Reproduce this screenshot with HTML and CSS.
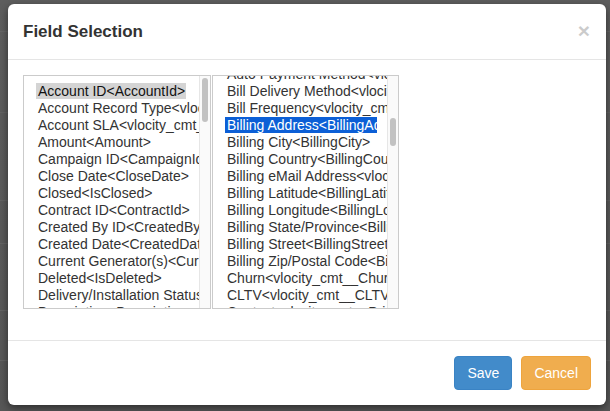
FILE: index.html
```html
<!DOCTYPE html>
<html lang="en">
<head>
<meta charset="utf-8">
<title>Field Selection</title>
<link rel="stylesheet" href="styles.css">
</head>
<body>
<div class="modal">
  <div class="modal-header">
    <h4 class="title">Field Selection</h4>
    <span class="close">&times;</span>
  </div>
  <div class="modal-body">
    <div class="lists">
      <div class="list list-a">
        <div class="items">
          <div class="inner">
            <div class="opt"><span class="hl hl-gray">Account ID&lt;AccountId&gt;</span></div>
            <div class="opt">Account Record Type&lt;vlocity_cmt__AccountRecordType__c&gt;</div>
            <div class="opt">Account SLA&lt;vlocity_cmt__AccountSLA__c&gt;</div>
            <div class="opt">Amount&lt;Amount&gt;</div>
            <div class="opt">Campaign ID&lt;CampaignId&gt;</div>
            <div class="opt">Close Date&lt;CloseDate&gt;</div>
            <div class="opt">Closed&lt;IsClosed&gt;</div>
            <div class="opt">Contract ID&lt;ContractId&gt;</div>
            <div class="opt">Created By ID&lt;CreatedById&gt;</div>
            <div class="opt">Created Date&lt;CreatedDate&gt;</div>
            <div class="opt">Current Generator(s)&lt;CurrentGenerators__c&gt;</div>
            <div class="opt">Deleted&lt;IsDeleted&gt;</div>
            <div class="opt">Delivery/Installation Status&lt;DeliveryInstallationStatus__c&gt;</div>
            <div class="opt">Description&lt;Description&gt;</div>
          </div>
        </div>
        <div class="track"><div class="thumb thumb-a"></div></div>
      </div>
      <div class="list list-b">
        <div class="items">
          <div class="inner scrolled">
            <div class="opt">Auto Payment Method&lt;vlocity_cmt__AutoPaymentMethod__c&gt;</div>
            <div class="opt">Bill Delivery Method&lt;vlocity_cmt__BillDeliveryMethod__c&gt;</div>
            <div class="opt">Bill Frequency&lt;vlocity_cmt__BillFrequency__c&gt;</div>
            <div class="opt"><span class="hl hl-blue">Billing Address&lt;BillingAddress&gt;</span></div>
            <div class="opt">Billing City&lt;BillingCity&gt;</div>
            <div class="opt">Billing Country&lt;BillingCountry&gt;</div>
            <div class="opt">Billing eMail Address&lt;vlocity_cmt__BillingEmailAddress__c&gt;</div>
            <div class="opt">Billing Latitude&lt;BillingLatitude&gt;</div>
            <div class="opt">Billing Longitude&lt;BillingLongitude&gt;</div>
            <div class="opt">Billing State/Province&lt;BillingState&gt;</div>
            <div class="opt">Billing Street&lt;BillingStreet&gt;</div>
            <div class="opt">Billing Zip/Postal Code&lt;BillingPostalCode&gt;</div>
            <div class="opt">Churn&lt;vlocity_cmt__ChurnScore__c&gt;</div>
            <div class="opt">CLTV&lt;vlocity_cmt__CLTV__c&gt;</div>
            <div class="opt">Contact&lt;vlocity_cmt__PrimaryContactId__c&gt;</div>
          </div>
        </div>
        <div class="track"><div class="thumb thumb-b"></div></div>
      </div>
    </div>
  </div>
  <div class="modal-footer">
    <button class="btn btn-save">Save</button>
    <button class="btn btn-cancel">Cancel</button>
  </div>
</div>
</body>
</html>
```
FILE: styles.css
```css
html, body {
  margin: 0;
  padding: 0;
}
body {
  width: 610px;
  height: 411px;
  overflow: hidden;
  font-family: "Liberation Sans", Arial, sans-serif;
  background-color: #5a5a5a;
  background-image:
    linear-gradient(to bottom, transparent 31px, #666 31px, #666 32px, transparent 32px),
    linear-gradient(to bottom, transparent 112px, #646464 112px, #646464 113px, transparent 113px),
    linear-gradient(to bottom, transparent 200px, #646464 200px, #646464 201px, transparent 201px),
    linear-gradient(to bottom, transparent 243px, #646464 243px, #646464 244px, transparent 244px),
    linear-gradient(to bottom, transparent 310px, #646464 310px, #646464 311px, transparent 311px),
    linear-gradient(to bottom, transparent 360px, #646464 360px, #646464 361px, transparent 361px),
    linear-gradient(to bottom, #5e5e5e 0, #575757 100%);
}
.modal {
  margin: 4px 0 0 8px;
  width: 598px;
  height: 401px;
  background: #fff;
  border-radius: 6px;
  box-shadow: 0 3px 9px rgba(0, 0, 0, 0.5);
  display: flex;
  flex-direction: column;
  overflow: hidden;
}
.modal-header {
  padding: 15px;
  border-bottom: 1px solid #e5e5e5;
  display: flex;
  justify-content: space-between;
  align-items: center;
}
.title {
  margin: 0;
  font-size: 17px;
  line-height: 25px;
  font-weight: bold;
  color: #333;
}
.close {
  font-size: 21px;
  font-weight: bold;
  line-height: 1;
  color: #000;
  opacity: 0.2;
  margin-top: -2px;
  margin-right: 1px;
}
.modal-body {
  flex: 1;
  padding: 15px 15px 0;
}
.lists {
  display: flex;
  gap: 1px;
}
.list {
  height: 234px;
  border: 1px solid #cbcbcb;
  box-sizing: border-box;
  display: flex;
  background: #fff;
}
.list-a {
  width: 188px;
}
.list-b {
  width: 187px;
}
.items {
  flex: 1;
  min-width: 0;
  overflow: hidden;
  padding: 7px 0 0 12px;
}
.scrolled {
  margin-top: -17px;
}
.opt {
  height: 17px;
  line-height: 17px;
  font-size: 14px;
  color: #333;
  white-space: nowrap;
  padding-left: 2px;
}
.hl {
  display: inline-block;
  vertical-align: top;
  height: 16px;
  line-height: 16px;
  margin-left: -2px;
  padding: 0 1px 0 2px;
}
.hl-gray {
  background: #d4d4d4;
  color: #111;
}
.hl-blue {
  background: #0c5fd6;
  color: #fff;
  width: 152px;
  box-sizing: border-box;
  overflow: hidden;
}
.track {
  flex: none;
  width: 11px;
  box-sizing: border-box;
  border-left: 1px solid #e6e6e6;
  background: #fafafa;
}
.thumb {
  width: 6px;
  margin-left: 2px;
  border-radius: 3px;
  background: #c2c2c2;
}
.thumb-a {
  margin-top: 2px;
  height: 44px;
}
.thumb-b {
  margin-top: 42px;
  height: 28px;
}
.modal-footer {
  border-top: 1px solid #e5e5e5;
  padding: 15px;
  display: flex;
  justify-content: flex-end;
  gap: 9px;
}
.btn {
  font-family: "Liberation Sans", Arial, sans-serif;
  font-size: 14px;
  line-height: 20px;
  padding: 6px 12px;
  border: 1px solid transparent;
  border-radius: 4px;
  color: #fff;
  margin: 0;
}
.btn-save {
  background: #428bca;
  border-color: #3a83c4;
}
.btn-cancel {
  background: #f0ad4e;
  border-color: #eea43d;
}
```
